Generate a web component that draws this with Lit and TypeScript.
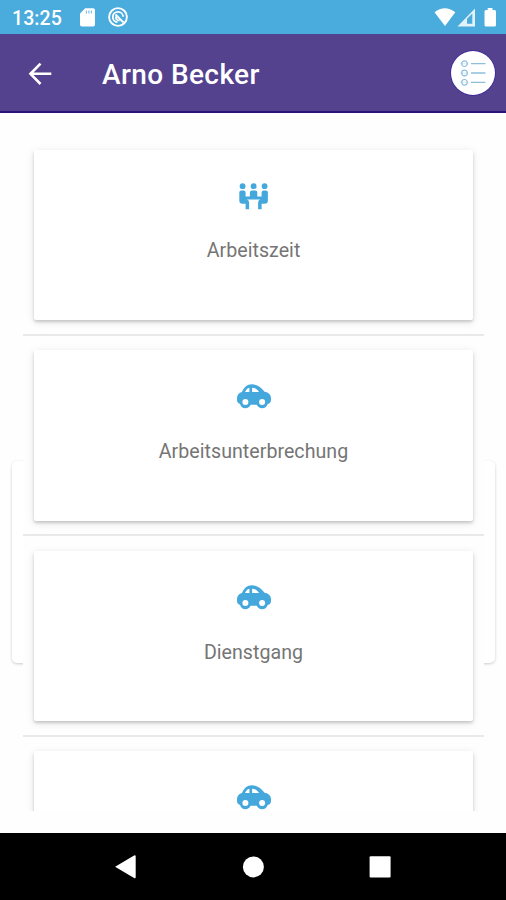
import { LitElement, html, css, svg } from "lit";
import { customElement, property } from "lit/decorators.js";

const meeting = svg`
  <circle cx="3.6" cy="3.2" r="2.9"/><circle cx="14.6" cy="3.2" r="2.9"/><circle cx="25.6" cy="3.2" r="2.9"/>
  <path d="M.3 9.6Q.3 7.4 2.3 7.4H4.6Q6.6 7.4 6.6 9.6V13.6H10.9V9.6Q10.9 7.4 12.9 7.4H16.3Q18.3 7.4 18.3 9.6V13.6H22.6V9.6Q22.6 7.4 24.6 7.4H26.9Q28.9 7.4 28.9 9.6V17.5Q28.9 20.8 25.6 20.8H22.6V26.2H19.1V19.4Q19.1 17.2 21.3 16.6H7.9Q10.1 17.2 10.1 19.4V26.2H6.6V20.8H3.6Q.3 20.8 .3 17.5Z"/>`;

const car = svg`
  <path fill-rule="evenodd" d="M4.9 7.8C7.3 3.2 9.8 .2 14.9 .2C20.6 .2 24.2 3.4 27.6 7.7C31.6 8.2 34 10.8 34 14.2V15.8C34 18 32.7 19.4 30.7 19.8C29.8 22.6 27.8 24.2 25.1 24.2C22.7 24.2 20.8 22.8 19.8 20.6H13.6C12.6 22.8 10.8 24.2 8.4 24.2C5.8 24.2 3.9 22.6 3 19.8C1.1 19.2 0 17.8 0 15.6V13.8C0 10.9 1.9 8.6 4.9 7.8ZM8.1 7.9H12.4V3.7C10.2 4.2 9 5.6 8.1 7.9ZM15.1 3.6V7.9H22C20.3 5.3 18.4 3.8 15.1 3.6Z"/>
  <circle cx="8.4" cy="17.9" r="3" fill="#fff"/><circle cx="25.1" cy="17.9" r="3" fill="#fff"/>`;

@customElement("status-bar")
class StatusBar extends LitElement {
  static styles = css`
    :host { display: flex; align-items: center; height: 34px; flex: none; background: #4aabdd; color: #fff; }
    .time { width: 79px; box-sizing: border-box; padding: 3px 0 0 12px; font: 500 19.5px/34px Roboto, sans-serif; letter-spacing: .1px; }
    .left { flex: 1; }
    svg { display: block; flex: none; }
  `;
  render() {
    return html`
      <div class="time">13:25</div>
      <svg class="left" viewBox="0 0 355 34" preserveAspectRatio="xMinYMid meet" height="34" fill="#fff">
        <path d="M6.2 8.3H14Q16 8.3 16 10.3V24.5Q16 26.5 14 26.5H3Q1 26.5 1 24.5V13.5Z"/>
        <path d="M7.4 10.6v3M9.9 10.6v3M12.4 10.6v3" stroke="#7fc4e8" stroke-width="1.2"/>
        <circle cx="39" cy="17" r="8.9" fill="none" stroke="#fff" stroke-width="1.9"/>
        <path d="M38.5 22.2A5.2 5.2 0 1 1 44.2 16.8M36.5 14.5L44.5 22.5M36.7 16.5Q36.8 20 40.5 20.7" fill="none" stroke="#fff" stroke-width="1.8"/>
      </svg>
      <svg width="72" height="34" viewBox="434 0 72 34" fill="#fff">
        <path d="M434.5 12.3Q444.8 4.2 455.3 12.3L445 26Z"/>
        <path d="M457.5 26.5L475 8.5V26.5Z" opacity=".85"/>
        <path d="M467 23.8V18.8L472.3 13.6V23.8Z" fill="#4aabdd"/>
        <path d="M487.7 8H492.5V10H494.5Q496 10 496 11.5V25Q496 26.5 494.5 26.5H486Q484.5 26.5 484.5 25V11.5Q484.5 10 486 10H487.7Z"/>
      </svg>`;
  }
}

@customElement("app-header")
class AppHeader extends LitElement {
  static styles = css`
    :host { display: flex; align-items: center; height: 79px; flex: none; box-sizing: border-box; padding: 0 11px 0 28px; background: #54428f; border-bottom: 2px solid #2c1378; color: #fff; }
    .title { flex: 1; margin-left: 50px; padding-top: 5px; font: 500 28px/36px Roboto, sans-serif; letter-spacing: .4px; }
    .menu { display: grid; place-items: center; width: 44px; height: 44px; margin-top: 1px; border-radius: 50%; background: #fff; box-shadow: 0 0 0 .7px #35209a; }
    svg { display: block; }
  `;
  render() {
    return html`
      <svg width="24" height="24" viewBox="0 0 24 24" fill="none" stroke="#fff" stroke-width="2.6"><path d="M23.3 12.8H3M12.5 2.6L2.5 12.8L12.5 23"/></svg>
      <div class="title">Arno Becker</div>
      <div class="menu">
        <svg width="26" height="26" viewBox="0 0 26 26" fill="none" stroke="#8dbfdd">
          <g stroke-width="1.2"><circle cx="4.5" cy="3.7" r="2.8"/><circle cx="4.5" cy="13" r="2.8"/><circle cx="4.5" cy="22.3" r="2.8"/></g>
          <path stroke-width="1.3" d="M0 3.7h8.5M0 13h8.5M0 22.3h8.5" opacity=".25"/>
          <path stroke-width="1.3" d="M11 3.7H25.5M11 13H25.5M11 22.3H25.5"/>
        </svg>
      </div>`;
  }
}

@customElement("activity-card")
class ActivityCard extends LitElement {
  @property() label = "";
  @property() icon = "car";
  static styles = css`
    :host { display: block; flex: none; padding: 14.7px 11px 0; }
    .card { height: 170.5px; box-sizing: border-box; padding-top: 33.7px; display: flex; flex-direction: column; align-items: center; background: #fff; border-radius: 2px; box-shadow: 0 2px 3px rgba(0,0,0,.16), 0 2px 8px rgba(0,0,0,.11); }
    .rule { height: 2px; margin: 13.4px -11px 0; background: #e9e9e9; }
    svg { display: block; fill: #45a8dc; }
    .label { margin-top: 27px; color: #757575; font: 400 19.6px/28px Roboto, sans-serif; letter-spacing: .04px; white-space: nowrap; }
  `;
  render() {
    return html`<div class="card">
      ${this.icon === "meeting"
        ? html`<svg width="30" height="27" viewBox="0 0 30 27">${meeting}</svg>`
        : html`<svg width="34" height="27" viewBox="0 -.1 34 27">${car}</svg>`}
      ${this.label ? html`<div class="label">${this.label}</div>` : ""}
    </div><div class="rule"></div>`;
  }
}

@customElement("nav-bar")
class NavBar extends LitElement {
  static styles = css`
    :host { display: flex; justify-content: center; align-items: center; gap: 104px; height: 67px; flex: none; background: #000; }
    svg { display: block; }
  `;
  render() {
    return html`
      <svg width="24" height="24" viewBox="0 0 24 24" fill="#fff"><path d="M1.1 11.7L20.1.4Q21.7-.2 21.7 1.4V22.2Q21.7 23.6 20.1 23Z"/></svg>
      <svg width="22" height="22" viewBox="0 0 22 22" fill="#fff"><circle cx="11.4" cy="10.9" r="10.5"/></svg>
      <svg width="24" height="24" viewBox="0 0 24 24" fill="#fff"><rect x="1.6" y="1.2" width="21" height="21.3" rx="1"/></svg>`;
  }
}

@customElement("app-root")
export class AppRoot extends LitElement {
  static styles = css`
    :host { display: flex; flex-direction: column; width: 506px; height: 900px; overflow: hidden; background: #fefefe; }
    .body { flex: 1; min-height: 0; display: grid; grid-template-columns: 12px 11px 461px 11px 11px; grid-template-rows: 22px 326px 202px 148px; }
    .back { grid-area: 3 / 2 / 4 / 5; border-radius: 5px; background: #fff; box-shadow: 0 1px 3px rgba(0,0,0,.2); }
    .list { grid-area: 2 / 3 / 5 / 4; z-index: 1; display: flex; flex-direction: column; overflow: hidden; background: #fefefe; }
  `;
  render() {
    return html`
      <status-bar></status-bar>
      <app-header></app-header>
      <div class="body">
        <div class="back"></div>
        <div class="list">
          <activity-card icon="meeting" label="Arbeitszeit"></activity-card>
          <activity-card label="Arbeitsunterbrechung"></activity-card>
          <activity-card label="Dienstgang"></activity-card>
          <activity-card></activity-card>
        </div>
      </div>
      <nav-bar></nav-bar>`;
  }
}
